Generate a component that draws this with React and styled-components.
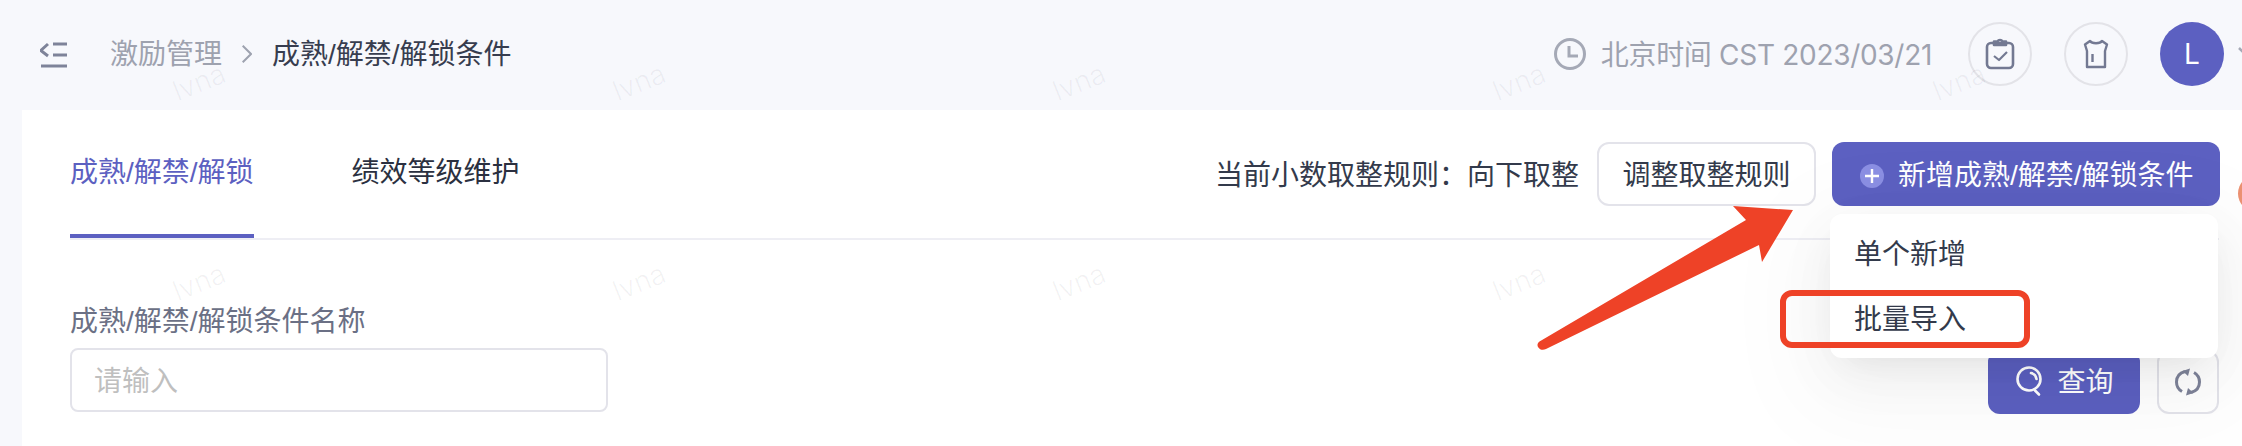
import React from 'react'
import styled, { createGlobalStyle } from 'styled-components'

const primary = '#5c60c1'
const line = '#e3e3ea'
const sans = '"Liberation Sans", "Noto Sans CJK SC", sans-serif'

export default function App() {
    return (
        <>
            <GlobalStyle />
            <Page>
                <Header>
                    <MenuIcon width="28" height="26" viewBox="0 0 28 26" fill="none">
                        <path d="M8 2 .8 8.500 8 14" />
                        <path d="M13 2h14M13 13h14M1 24h26" />
                    </MenuIcon>
                    <Crumbs>
                        <CrumbParent>激励管理</CrumbParent>
                        <svg width="10" height="18" viewBox="0 0 10 18" fill="none" stroke="#9ea2af" strokeWidth="2">
                            <path d="M0.7 0.7 9 9l-8.3 8.3" />
                        </svg>
                        <CrumbCurrent>成熟/解禁/解锁条件</CrumbCurrent>
                    </Crumbs>
                    <HeaderRight>
                        <TimeInfo>
                            <svg width="32" height="32" viewBox="0 0 32 32" fill="none" stroke="#a5a9b6" strokeWidth="3">
                                <circle cx="16" cy="16" r="14.5" />
                                <path d="M15 8v10h9" />
                            </svg>
                            <TimeText>北京时间 CST 2023/03/21</TimeText>
                        </TimeInfo>
                        <RoundIcon>
                            <svg width="30" height="32" viewBox="0 0 30 32" fill="none" stroke="#737992" strokeWidth="2.600" strokeLinejoin="round">
                                <rect x="2" y="5" width="26" height="25" rx="4" />
                                <path d="M9 5V3.500h3.500c1-2 4-2 5 0H21V7H9Z" />
                                <path d="M9 18l5 4 8-8" strokeWidth="2.200" />
                            </svg>
                        </RoundIcon>
                        <RoundIcon>
                            <svg width="30" height="30" viewBox="0 0 30 30" fill="none" stroke="#737992" strokeWidth="2.400" strokeLinejoin="round">
                                <path d="M9 2c2 3 10 3 12 0l5 3.500-2 6.500v16H6V12L4 5.500Z" />
                                <path d="M11.500 15v8" />
                            </svg>
                        </RoundIcon>
                        <Avatar>L</Avatar>
                        <UserChevron width="18" height="10" viewBox="0 0 18 10" fill="none" stroke="#a5a9b6" strokeWidth="2.500">
                            <path d="M1 1l8 8 8-8" />
                        </UserChevron>
                    </HeaderRight>
                </Header>
                <Panel>
                    <TabRow>
                        <Tabs>
                            <Tab $active>成熟/解禁/解锁</Tab>
                            <Tab>绩效等级维护</Tab>
                        </Tabs>
                        <Actions>
                            <RuleLabel>当前小数取整规则：向下取整</RuleLabel>
                            <OutlineButton>调整取整规则</OutlineButton>
                            <AddWrap>
                                <PrimaryButton>
                                    <PlusDot>
                                        <svg width="14" height="14" viewBox="0 0 14 14" stroke="#fff" strokeWidth="2.400">
                                            <path d="M7 0v14M0 7h14" />
                                        </svg>
                                    </PlusDot>
                                    新增成熟/解禁/解锁条件
                                </PrimaryButton>
                                <Menu>
                                    <MenuItem>单个新增</MenuItem>
                                    <MenuItem>批量导入</MenuItem>
                                </Menu>
                            </AddWrap>
                        </Actions>
                    </TabRow>
                    <FilterRow>
                        <Field>
                            <FieldLabel>成熟/解禁/解锁条件名称</FieldLabel>
                            <Input placeholder="请输入" />
                        </Field>
                        <FilterButtons>
                            <QueryButton>
                                <QueryIcon width="32" height="32" viewBox="0 0 32 32" fill="none" stroke="#fff" strokeWidth="2.600" strokeLinecap="round">
                                    <circle cx="15" cy="14" r="11.500" />
                                    <path d="M21 25.500l4 4" />
                                    <path d="M17 8c3 .5 5 3 5.500 6" />
                                </QueryIcon>
                                查询
                            </QueryButton>
                            <ResetButton>
                                <svg width="28" height="30" viewBox="0 0 28 30" fill="none" stroke="#7e8399" strokeWidth="3">
                                    <path d="M11 4.500C5.500 6 2.500 10 2.500 15c0 4 2 7.500 5.500 9.500" />
                                    <path d="M17 25.500c5.500-1.500 8.500-5.500 8.500-10.500 0-4-2-7.500-5.500-9.500" />
                                    <path d="M16 1.500l-2 7.500-5.500-5ZM12 28.500l2-7.500 5.500 5Z" fill="#7e8399" stroke="none" />
                                </svg>
                            </ResetButton>
                        </FilterButtons>
                    </FilterRow>
                </Panel>
                <Watermarks>
                    {Array.from({ length: 10 }, (_, i) => <Mark key={i}>lvna</Mark>)}
                </Watermarks>
                <EdgeBlob />
                <Arrow width="262" height="150" viewBox="0 0 262 150" fill="#ee4227">
                    <path d="M209 17 196 3l60 4-31 52-3-17L9 146c-3 1.500-6 1-8-2-1-2-.5-4 1.500-5.500Z" />
                </Arrow>
                <HighlightBox />
            </Page>
        </>
    )
}

const GlobalStyle = createGlobalStyle`
    html, body {
        margin: 0;
        padding: 0;
        background: #f7f8fc;
    }
    * {
        box-sizing: border-box;
    }
`
const Page = styled.div`
    position: relative;
    width: 2242px;
    height: 446px;
    overflow: hidden;
    background: #f7f8fc;
    font-family: ${sans};
    font-size: 28px;
    line-height: 40px;
`
const Header = styled.header`
    display: flex;
    align-items: center;
    height: 110px;
    padding: 0 0 2px 40px;
`
const MenuIcon = styled.svg`
    flex-shrink: 0;
    margin: 2px 42px 0 0;
    stroke: #7e8399;
    stroke-width: 3px;
`
const Crumbs = styled.nav`
    display: flex;
    align-items: center;
    gap: 20px;
`
const CrumbParent = styled.span`
    padding-top: 2px;
    color: #9ea2af;
`
const CrumbCurrent = styled.span`
    padding-top: 2px;
    color: #373d4f;
`
const HeaderRight = styled.div`
    display: flex;
    align-items: center;
    margin-left: auto;
`
const TimeInfo = styled.div`
    display: flex;
    align-items: center;
    gap: 15px;
    margin-right: 36px;
`
const TimeText = styled.span`
    padding-top: 2px;
    font-family: Inter, "Noto Sans CJK SC", sans-serif;
    letter-spacing: -0.3px;
    color: #9ea2af;
    white-space: nowrap;
`
const RoundIcon = styled.div`
    display: flex;
    align-items: center;
    justify-content: center;
    width: 64px;
    height: 64px;
    margin-right: 32px;
    border: 2px solid #e3e3e8;
    border-radius: 50%;
`
const Avatar = styled.div`
    display: flex;
    align-items: center;
    justify-content: center;
    width: 64px;
    height: 64px;
    border-radius: 50%;
    background: ${primary};
    color: #fff;
    font-family: Inter, sans-serif;
`
const UserChevron = styled.svg`
    flex-shrink: 0;
    margin: 0 -14px 4px 14px;
`
const Panel = styled.main`
    height: 336px;
    margin-left: 22px;
    padding: 32px 22px 0 48px;
    background: #fff;
`
const TabRow = styled.div`
    display: flex;
    justify-content: space-between;
    height: 98px;
    margin-right: 1px;
    border-bottom: 2px solid #eeeef4;
`
const Tabs = styled.div`
    display: flex;
    gap: 98px;
`
const Tab = styled.div`
    height: 96px;
    padding-top: 11px;
    border-bottom: 4px solid ${props => props.$active ? primary : 'transparent'};
    color: ${props => props.$active ? primary : '#2b3040'};
`
const Actions = styled.div`
    display: flex;
    align-items: flex-start;
    margin-right: -1px;
`
const RuleLabel = styled.span`
    margin: 2px 18px 0 0;
    line-height: 64px;
    color: #333a4b;
    white-space: nowrap;
`
const OutlineButton = styled.button`
    width: 219px;
    height: 64px;
    margin-right: 16px;
    padding: 3px 0 0;
    border: 2px solid ${line};
    border-radius: 12px;
    background: #fff;
    color: #333a4b;
    font: inherit;
`
const AddWrap = styled.div`
    position: relative;
    z-index: 3;
`
const PrimaryButton = styled.button`
    display: flex;
    align-items: center;
    gap: 14px;
    width: 388px;
    height: 64px;
    padding: 3px 0 0 28px;
    border: none;
    border-radius: 12px;
    background: ${primary};
    color: #fff;
    font: inherit;
    white-space: nowrap;
`
const PlusDot = styled.span`
    display: flex;
    align-items: center;
    justify-content: center;
    width: 24px;
    height: 24px;
    border-radius: 50%;
    background: #8b8fe3;
`
const Menu = styled.div`
    position: absolute;
    top: 72px;
    left: -2px;
    width: 388px;
    height: 144px;
    padding: 8px 0 6px;
    border-radius: 12px;
    background: #fff;
    box-shadow: 0 12px 32px -16px rgba(0, 0, 0, 0.08), 0 18px 56px rgba(0, 0, 0, 0.05), 0 24px 96px 32px rgba(0, 0, 0, 0.03);
`
const MenuItem = styled.div`
    height: 65px;
    padding-left: 24px;
    line-height: 65px;
    color: #333a4b;
`
const FilterRow = styled.div`
    display: flex;
    justify-content: space-between;
    align-items: flex-end;
    margin: 62px 1px 0 0;
`
const Field = styled.div`
    padding-bottom: 2px;
`
const FieldLabel = styled.div`
    margin-bottom: 6px;
    color: #6b7085;
`
const Input = styled.input`
    display: block;
    width: 538px;
    height: 64px;
    padding: 3px 22px 0;
    border: 2px solid ${line};
    border-radius: 8px;
    outline: none;
    font: inherit;
    &::placeholder {
        color: #bfbfbf;
    }
`
const FilterButtons = styled.div`
    display: flex;
    gap: 17px;
`
const QueryButton = styled.button`
    display: flex;
    align-items: center;
    justify-content: center;
    gap: 11px;
    width: 152px;
    height: 64px;
    padding: 2px 0 0;
    border: none;
    border-radius: 12px;
    background: ${primary};
    color: #fff;
    font: inherit;
`
const QueryIcon = styled.svg`
    margin-top: -4px;
`
const ResetButton = styled.button`
    display: flex;
    align-items: center;
    justify-content: center;
    width: 62px;
    height: 64px;
    padding: 0;
    border: 2px solid ${line};
    border-radius: 12px;
    background: #fff;
`
const Watermarks = styled.div`
    position: absolute;
    top: -18px;
    left: -21px;
    z-index: 2;
    display: grid;
    grid-template-columns: repeat(5, 440px);
    grid-auto-rows: 200px;
    pointer-events: none;
`
const Mark = styled.span`
    place-self: center;
    font-family: Inter, sans-serif;
    font-size: 28px;
    font-weight: 300;
    color: rgba(40, 40, 60, 0.06);
    transform: rotate(-22deg);
`
const EdgeBlob = styled.div`
    position: absolute;
    top: 175px;
    left: 2238px;
    width: 37px;
    height: 37px;
    border-radius: 50%;
    background: #ec9172;
`
const Arrow = styled.svg`
    position: absolute;
    top: 203px;
    left: 1537px;
    z-index: 4;
`
const HighlightBox = styled.div`
    position: absolute;
    top: 290px;
    left: 1780px;
    z-index: 4;
    width: 250px;
    height: 58px;
    border: 6px solid #ee4227;
    border-radius: 12px;
`
